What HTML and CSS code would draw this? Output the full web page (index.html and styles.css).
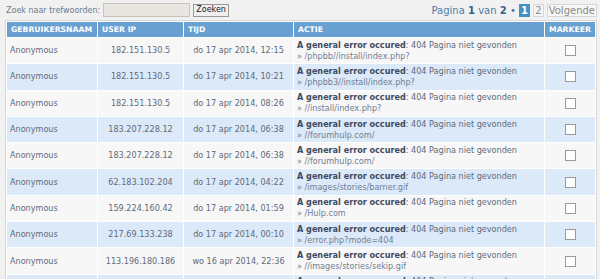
FILE: index.html
```html
<!DOCTYPE html>
<html lang="nl">
<head>
    <meta charset="UTF-8" />
    <title>Foutenlog</title>
    <link rel="stylesheet" href="styles.css">
</head>
<body>
    <div class="toolbar">
        <form class="search">
            <label for="keywords">Zoek naar trefwoorden:</label>
            <input type="text" id="keywords" />
            <button type="button">Zoeken</button>
        </form>
        <div class="pagination">
            Pagina <strong>1</strong> van <strong>2</strong> &bull;
            <span class="page current">1</span>
            <span class="page">2</span>
            <span class="page">Volgende</span>
        </div>
    </div>
    <table class="log">
        <thead>
            <tr>
                <th class="col-user">Gebruikersnaam</th>
                <th class="col-ip">User IP</th>
                <th class="col-time">Tijd</th>
                <th class="col-action">Actie</th>
                <th class="col-mark">Markeer</th>
            </tr>
        </thead>
        <tbody>
            <tr class="row1">
                <td>Anonymous</td>
                <td class="center">182.151.130.5</td>
                <td class="center">do 17 apr 2014, 12:15</td>
                <td><strong>A general error occured</strong>: 404 Pagina niet gevonden<br><span class="path">&raquo; /phpbb//install/index.php?</span></td>
                <td class="center"><input type="checkbox" /></td>
            </tr>
            <tr class="row2">
                <td>Anonymous</td>
                <td class="center">182.151.130.5</td>
                <td class="center">do 17 apr 2014, 10:21</td>
                <td><strong>A general error occured</strong>: 404 Pagina niet gevonden<br><span class="path">&raquo; /phpbb3//install/index.php?</span></td>
                <td class="center"><input type="checkbox" /></td>
            </tr>
            <tr class="row1">
                <td>Anonymous</td>
                <td class="center">182.151.130.5</td>
                <td class="center">do 17 apr 2014, 08:26</td>
                <td><strong>A general error occured</strong>: 404 Pagina niet gevonden<br><span class="path">&raquo; //install/index.php?</span></td>
                <td class="center"><input type="checkbox" /></td>
            </tr>
            <tr class="row2">
                <td>Anonymous</td>
                <td class="center">183.207.228.12</td>
                <td class="center">do 17 apr 2014, 06:38</td>
                <td><strong>A general error occured</strong>: 404 Pagina niet gevonden<br><span class="path">&raquo; //forumhulp.com/</span></td>
                <td class="center"><input type="checkbox" /></td>
            </tr>
            <tr class="row1">
                <td>Anonymous</td>
                <td class="center">183.207.228.12</td>
                <td class="center">do 17 apr 2014, 06:38</td>
                <td><strong>A general error occured</strong>: 404 Pagina niet gevonden<br><span class="path">&raquo; //forumhulp.com/</span></td>
                <td class="center"><input type="checkbox" /></td>
            </tr>
            <tr class="row2">
                <td>Anonymous</td>
                <td class="center">62.183.102.204</td>
                <td class="center">do 17 apr 2014, 04:22</td>
                <td><strong>A general error occured</strong>: 404 Pagina niet gevonden<br><span class="path">&raquo; /images/stories/barner.gif</span></td>
                <td class="center"><input type="checkbox" /></td>
            </tr>
            <tr class="row1">
                <td>Anonymous</td>
                <td class="center">159.224.160.42</td>
                <td class="center">do 17 apr 2014, 01:59</td>
                <td><strong>A general error occured</strong>: 404 Pagina niet gevonden<br><span class="path">&raquo; /Hulp.com</span></td>
                <td class="center"><input type="checkbox" /></td>
            </tr>
            <tr class="row2">
                <td>Anonymous</td>
                <td class="center">217.69.133.238</td>
                <td class="center">do 17 apr 2014, 00:10</td>
                <td><strong>A general error occured</strong>: 404 Pagina niet gevonden<br><span class="path">&raquo; /error.php?mode=404</span></td>
                <td class="center"><input type="checkbox" /></td>
            </tr>
            <tr class="row1">
                <td>Anonymous</td>
                <td class="center">113.196.180.186</td>
                <td class="center">wo 16 apr 2014, 22:36</td>
                <td><strong>A general error occured</strong>: 404 Pagina niet gevonden<br><span class="path">&raquo; //images/stories/sekip.gif</span></td>
                <td class="center"><input type="checkbox" /></td>
            </tr>
            <tr class="row2">
                <td>Anonymous</td>
                <td class="center">113.196.180.186</td>
                <td class="center">wo 16 apr 2014, 20:27</td>
                <td><strong>A general error occured</strong>: 404 Pagina niet gevonden<br><span class="path">&raquo; //images/stories/sekip.gif</span></td>
                <td class="center"><input type="checkbox" /></td>
            </tr>
        </tbody>
    </table>
</body>
</html>
```

FILE: styles.css
```css
:root {
    --text-color: #536482;
    --head-color: #68a0d2;
    --row1-color: #f7f7f7;
    --row2-color: #dce9f8;
}

body {
    margin: 0;
    padding: 2px 3px 0 5px;
    background-color: #f1f1f1;
    color: var(--text-color);
    font-family: "DejaVu Sans", Verdana, sans-serif;
    font-size: 8px;
}

.toolbar {
    display: flex;
    justify-content: space-between;
    align-items: center;
    height: 16px;
    margin-bottom: 2px;
}

.search {
    display: flex;
    align-items: center;
    margin: 0;
    padding-left: 1px;
}

.search label {
    color: #6b7b8f;
    margin-right: 3px;
}

.search input {
    width: 85px;
    height: 12px;
    padding: 0;
    border: 1px solid #c9c4bc;
    background-color: #e9e6e1;
    margin-right: 3px;
}

.search button {
    height: 13px;
    padding: 0 2px;
    border: 1px solid #999;
    background-color: #efefef;
    font-family: "DejaVu Sans", Verdana, sans-serif;
    font-size: 8px;
    color: #222;
    line-height: 10px;
}

.pagination {
    font-size: 10px;
    color: #4d7aa8;
    white-space: nowrap;
}

.pagination strong {
    color: #3a5f86;
}

.page {
    display: inline-block;
    padding: 0 1px;
    border: 1px solid #d7d7d7;
    background-color: #f6f6f6;
    color: #8a8a8a;
    font-size: 10px;
    line-height: 11px;
}

.page.current {
    background-color: #4491c6;
    border-color: #4491c6;
    color: #fff;
    font-weight: bold;
}

.log {
    width: 592px;
    border-collapse: separate;
    border-spacing: 1px;
    background-color: #fff;
    border: 1px solid #d8d8d8;
    table-layout: fixed;
}

.log th {
    height: 15px;
    padding: 0 0 0 4px;
    background-color: var(--head-color);
    color: #fff;
    font-size: 7.7px;
    text-align: left;
    text-transform: uppercase;
    font-weight: bold;
}

.col-user { width: 86px; }
.col-ip { width: 81px; }
.col-time { width: 105px; }
.col-mark { width: 46px; }

.log td {
    height: 25.3px;
    padding: 0 3px;
    font-size: 8.1px;
    line-height: 11px;
    color: #60697a;
    white-space: nowrap;
    overflow: hidden;
}

.log td.center {
    text-align: center;
}

.log td strong {
    color: #3d4b5e;
}

.log .path {
    color: #6f7f95;
}

.row1 td {
    background-color: var(--row1-color);
}

.row2 td {
    background-color: var(--row2-color);
}

.log input[type="checkbox"] {
    appearance: none;
    width: 11px;
    height: 11px;
    margin: 0;
    border: 1px solid #9a9a9a;
    background-color: #fff;
    vertical-align: middle;
}
```
